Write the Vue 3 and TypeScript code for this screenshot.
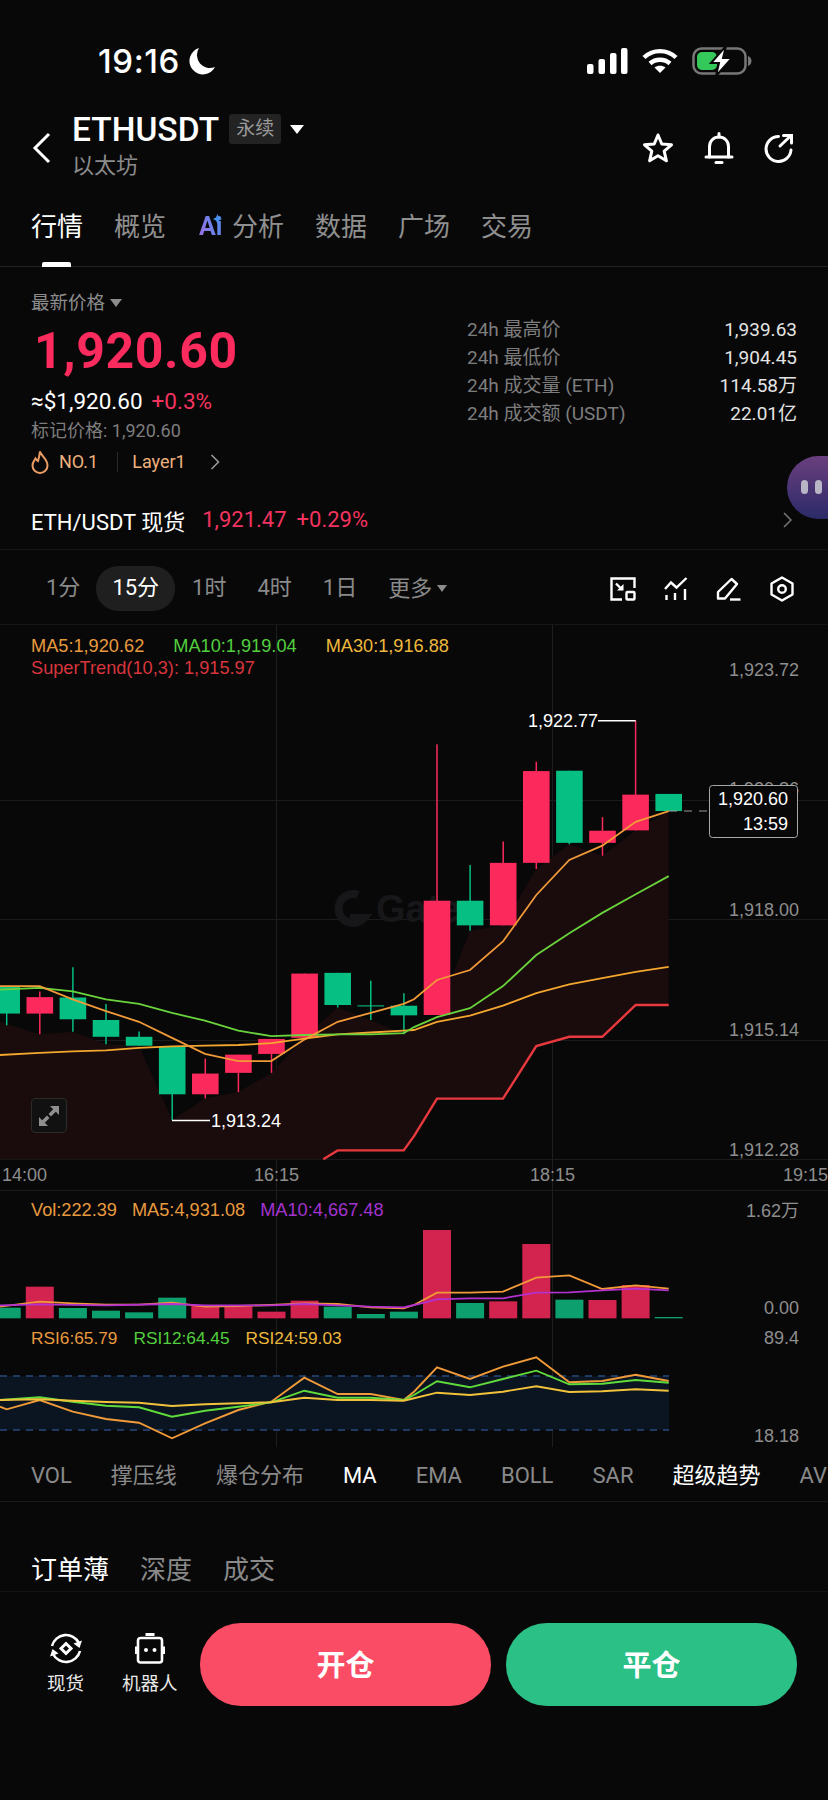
<script setup lang="ts">
// K线页面 — 坐标按截图裁剪取点，下面的 line()/yM() 负责换算成页面像素
type Pt = [number, number]

const yM = (z: number) => 620 + z / 2.8
const yL = (z: number) => 1180 + z / 3

// l: 左半裁剪的点, r: 右半裁剪的点
const toPts = (l: Pt[], r: Pt[], fy: (z: number) => number): [number, number][] => [
  ...l.map(([x, z]): [number, number] => [x / 3, fy(z)]),
  ...r.map(([x, z]): [number, number] => [414 + x / 3, fy(z)]),
]
const line = (l: Pt[], r: Pt[], fy: (z: number) => number) =>
  toPts(l, r, fy).map((p) => p.map((v) => v.toFixed(1)).join(',')).join(' ')

const barX = (i: number) => 6.7 + 33.1 * i

interface Candle { up: boolean; top: number; bot: number; hi: number; lo: number }
const candles: Candle[] = [
  { up: true, top: 1027, bot: 1102, hi: 1027, lo: 1135 },
  { up: false, top: 1056, bot: 1102, hi: 1040, lo: 1160 },
  { up: true, top: 1057, bot: 1118, hi: 972, lo: 1153 },
  { up: true, top: 1120, bot: 1167, hi: 1075, lo: 1188 },
  { up: true, top: 1167, bot: 1192, hi: 1152, lo: 1192 },
  { up: true, top: 1193, bot: 1328, hi: 1193, lo: 1400 },
  { up: false, top: 1270, bot: 1328, hi: 1228, lo: 1340 },
  { up: false, top: 1217, bot: 1268, hi: 1217, lo: 1322 },
  { up: false, top: 1173, bot: 1215, hi: 1173, lo: 1268 },
  { up: false, top: 990, bot: 1170, hi: 990, lo: 1170 },
  { up: true, top: 988, bot: 1078, hi: 988, lo: 1085 },
  { up: true, top: 1079, bot: 1082, hi: 1010, lo: 1120 },
  { up: true, top: 1080, bot: 1107, hi: 1045, lo: 1160 },
  { up: false, top: 786, bot: 1106, hi: 348, lo: 1106 },
  { up: true, top: 786, bot: 855, hi: 686, lo: 870 },
  { up: false, top: 680, bot: 855, hi: 620, lo: 855 },
  { up: false, top: 423, bot: 680, hi: 397, lo: 697 },
  { up: true, top: 422, bot: 624, hi: 422, lo: 628 },
  { up: false, top: 590, bot: 624, hi: 552, lo: 660 },
  { up: false, top: 489, bot: 589, hi: 282, lo: 589 },
  { up: true, top: 487, bot: 535, hi: 487, lo: 535 },
]

const ma5 = line(
  [[0, 1025], [119, 1025], [218, 1062], [318, 1095], [417, 1125], [516, 1170], [615, 1215], [680, 1228], [715, 1235], [814, 1235], [913, 1175], [1013, 1125], [1112, 1100], [1211, 1075]],
  [[0, 1062], [69, 1008], [168, 980], [267, 900], [367, 770], [466, 672], [565, 632], [665, 565], [764, 535]],
  yM,
)
const ma10 = line(
  [[0, 1035], [119, 1030], [218, 1040], [318, 1062], [417, 1075], [516, 1100], [615, 1122], [715, 1150], [814, 1165], [913, 1162], [1013, 1160], [1112, 1160], [1211, 1157]],
  [[0, 1140], [69, 1112], [168, 1087], [267, 1025], [367, 938], [466, 877], [565, 820], [665, 768], [764, 717]],
  yM,
)
const ma30 = line(
  [[0, 1218], [119, 1212], [218, 1208], [318, 1205], [417, 1198], [516, 1194], [615, 1192], [715, 1190], [814, 1185], [913, 1172], [1013, 1160], [1112, 1155], [1211, 1150]],
  [[0, 1148], [69, 1125], [168, 1108], [267, 1080], [367, 1045], [466, 1020], [565, 1003], [665, 985], [764, 971]],
  yM,
)
const superLeft: Pt[] = [[970, 1510], [1013, 1485], [1211, 1485]]
const superRight: Pt[] = [[0, 1445], [69, 1340], [267, 1340], [367, 1193], [466, 1167], [565, 1167], [665, 1078], [764, 1078]]
const superLine = line(superLeft, superRight, yM)

// 超级趋势下方的暗红填充
const trendFill = [
  line(
    [[0, 1125], [119, 1160], [218, 1153], [318, 1188], [417, 1192], [516, 1400], [615, 1340], [715, 1322], [814, 1268], [913, 1170], [1013, 1085], [1112, 1120], [1211, 1160]],
    [[69, 1106], [168, 870], [267, 855], [367, 697], [466, 628], [565, 660], [665, 589], [764, 535]],
    yM,
  ),
  line([], [...superRight].reverse(), yM),
  line([...superLeft].reverse(), [], yM),
  `0,${yM(1510).toFixed(1)}`,
].join(' ')

const grid = [800, 919, 1040, 1159]
const priceAxis = [
  { t: '1,923.72', y: 669 },
  { t: '1,918.00', y: 909 },
  { t: '1,915.14', y: 1029 },
  { t: '1,912.28', y: 1149 },
]
const timeAxis = [
  { t: '14:00', x: 2 },
  { t: '16:15', x: 254 },
  { t: '18:15', x: 530 },
  { t: '19:15', x: 783 },
]

const volBase = yL(415)
const vols: [number, boolean][] = [
  [383, true], [320, false], [384, true], [392, true], [397, true], [353, true], [378, false],
  [378, false], [395, false], [362, false], [380, true], [402, true], [395, true], [150, false],
  [369, true], [364, false], [192, false], [359, true], [360, false], [315, false], [411, true],
]
const volMa5 = line(
  [[0, 380], [119, 365], [218, 370], [318, 374], [417, 374], [516, 368], [615, 380], [715, 378], [814, 375], [913, 370], [1013, 372], [1112, 382], [1211, 385]],
  [[0, 375], [69, 338], [168, 338], [267, 335], [367, 293], [466, 286], [565, 327], [665, 316], [764, 326]],
  yL,
)
const volMa10 = line(
  [[0, 376], [119, 373], [318, 376], [516, 372], [615, 376], [814, 376], [913, 372], [1013, 376], [1112, 380], [1211, 382]],
  [[0, 375], [69, 358], [168, 355], [267, 355], [367, 338], [466, 337], [565, 331], [665, 326], [764, 331]],
  yL,
)
const rsi6 = line(
  [[0, 680], [20, 688], [119, 660], [218, 695], [318, 717], [417, 728], [516, 775], [615, 730], [715, 690], [814, 665], [913, 593], [1013, 642], [1112, 642], [1211, 660]],
  [[0, 635], [69, 562], [168, 597], [267, 560], [367, 532], [466, 607], [565, 603], [665, 584], [764, 603]],
  yL,
)
const rsi12 = line(
  [[0, 660], [119, 652], [218, 665], [318, 677], [417, 682], [516, 710], [615, 692], [715, 680], [814, 667], [913, 632], [1013, 653], [1112, 653], [1211, 660]],
  [[0, 645], [69, 604], [168, 622], [267, 597], [367, 572], [466, 613], [565, 611], [665, 600], [764, 608]],
  yL,
)
const rsi24 = line(
  [[0, 660], [119, 658], [218, 662], [318, 666], [417, 668], [516, 678], [615, 673], [715, 670], [814, 667], [913, 653], [1013, 660], [1112, 660], [1211, 662]],
  [[0, 655], [69, 638], [168, 645], [267, 635], [367, 619], [466, 636], [565, 634], [665, 628], [764, 632]],
  yL,
)

const stats = [
  { label: '24h 最高价', value: '1,939.63' },
  { label: '24h 最低价', value: '1,904.45' },
  { label: '24h 成交量 (ETH)', value: '114.58万' },
  { label: '24h 成交额 (USDT)', value: '22.01亿' },
]
const indicators = [
  { t: 'VOL' }, { t: '撑压线' }, { t: '爆仓分布' }, { t: 'MA', on: true }, { t: 'EMA' },
  { t: 'BOLL' }, { t: 'SAR' }, { t: '超级趋势', on: true }, { t: 'AVL' },
]
</script>

<template>
  <div class="page">
    <div class="status">
      <div class="status-left">
        <span class="clock">19:16</span>
        <svg width="27" height="28" viewBox="0 0 27 28"><path d="M10 1A13.5 13.5 0 1 0 26 20 A13 13 0 0 1 10 1Z" fill="#fff" /></svg>
      </div>
      <div class="status-right">
        <svg width="41" height="26" viewBox="0 0 41 26" fill="#fff">
          <rect x="0" y="16" width="6.5" height="10" rx="2" />
          <rect x="11.5" y="11" width="6.5" height="15" rx="2" />
          <rect x="23" y="5" width="6.5" height="21" rx="2" />
          <rect x="34" y="0" width="6.5" height="26" rx="2" />
        </svg>
        <svg width="36" height="26" viewBox="0 0 36 26" fill="none" stroke="#fff" stroke-width="4.4">
          <path d="M2 9.5C11 1 25 1 34 9.5" />
          <path d="M8 15.5C13.5 10.5 22.5 10.5 28 15.5" />
          <path d="M18 25L12.5 19.5C15.5 17 20.5 17 23.5 19.5Z" fill="#fff" stroke="none" />
        </svg>
        <svg width="60" height="30" viewBox="0 0 60 30" fill="none">
          <rect x="1.5" y="2.5" width="52" height="25" rx="8" stroke="#777" stroke-width="2.5" />
          <path d="M56 10c2 .5 3.5 2.5 3.5 5s-1.500 4.500-3.500 5Z" fill="#777" />
          <rect x="5" y="6" width="20" height="18" rx="5" fill="#34c759" />
          <path d="M34 0L19 17H27L24 30L40 12H31Z" fill="#fff" stroke="#080809" stroke-width="2" />
        </svg>
      </div>
    </div>

    <header class="head">
      <svg class="back" width="20" height="32" viewBox="0 0 20 32" fill="none" stroke="#fff" stroke-width="3"><path d="M17 2L3 16L17 30" /></svg>
      <div class="title">
        <div class="title-row">
          <span class="symbol">ETHUSDT</span>
          <span class="perp">永续</span>
          <span class="caret-w"></span>
        </div>
        <div class="cn-name">以太坊</div>
      </div>
      <div class="head-icons">
        <svg width="32" height="32" viewBox="0 0 32 32" fill="none" stroke="#fff" stroke-width="3" stroke-linejoin="round"><path d="M16 3L19.800 12L29.500 12.800L22.200 19.200L24.400 28.800L16 23.700L7.600 28.800L9.800 19.200L2.500 12.800L12.200 12Z" /></svg>
        <svg width="30" height="32" viewBox="0 0 30 32" fill="none" stroke="#fff" stroke-width="3" stroke-linecap="round"><path d="M5.500 25V14.500C5.500 9 9.500 5 15 5S24.500 9 24.500 14.500V25" /><path d="M2 25H28M15 1.500V5" /><path d="M12 30.500H18" /></svg>
        <svg width="30" height="30" viewBox="0 0 30 30" fill="none" stroke="#fff" stroke-width="3" stroke-linecap="round"><path d="M14.500 3.500A12.500 12.500 0 1 0 27 17" /><path d="M16 13L26.500 3M19.500 2.500H27.500V10" /></svg>
      </div>
    </header>

    <nav class="tabs">
      <span class="tab active">行情</span>
      <span class="tab">概览</span>
      <span class="tab ai-tab">
        <span class="ai">Ai<svg class="ai-star" width="9" height="10" viewBox="0 0 9 10"><path d="M4.500 0L6 3.500L9 5L6 6.500L4.500 10L3 6.500L0 5L3 3.500Z" fill="#4a90f0" /></svg></span>分析
      </span>
      <span class="tab">数据</span>
      <span class="tab">广场</span>
      <span class="tab">交易</span>
    </nav>

    <section class="info">
      <div class="info-left">
        <div class="latest">最新价格<span class="caret-g"></span></div>
        <div class="last-price">1,920.60</div>
        <div class="usd">≈$1,920.60<span class="up">+0.3%</span></div>
        <div class="mark">标记价格: 1,920.60</div>
        <div class="rank">
          <svg width="18" height="24" viewBox="0 0 18 24" fill="none" stroke="#eb9c62" stroke-width="2"><path d="M9 1.500C10 6 16.500 9 16.500 15.500A7.500 7.500 0 0 1 1.500 15.500C1.500 12 3.500 10.500 4.500 8.500C5.500 10 6 10.500 7 11C8 8 8.500 5 9 1.500Z" /></svg>
          <span class="no1">NO.1</span>
          <i class="rank-sep"></i>
          <span>Layer1</span>
          <svg class="rank-go" width="10" height="18" viewBox="0 0 10 18" fill="none" stroke="#999" stroke-width="1.600"><path d="M1.500 2L8.500 9L1.500 16" /></svg>
        </div>
      </div>
      <div class="info-right">
        <div v-for="s in stats" :key="s.label" class="stat">
          <span>{{ s.label }}</span><b>{{ s.value }}</b>
        </div>
      </div>
    </section>

    <div class="spot">
      <span class="spot-name">ETH/USDT 现货</span>
      <span class="up spot-price">1,921.47</span>
      <span class="up">+0.29%</span>
      <svg class="spot-go" width="9" height="18" viewBox="0 0 9 18" fill="none" stroke="#777" stroke-width="1.500"><path d="M1 2L8 9L1 16" /></svg>
    </div>

    <div class="periods">
      <div class="period-list">
        <span class="period">1分</span>
        <span class="period on">15分</span>
        <span class="period">1时</span>
        <span class="period">4时</span>
        <span class="period day">1日</span>
        <span class="period more">更多<i class="caret-g small"></i></span>
      </div>
      <div class="tools">
        <svg width="26" height="24" viewBox="0 0 26 24" fill="none" stroke="#fff" stroke-width="2.400"><path d="M12 22.500H1.500V1.500H24.500V11" /><rect x="16.500" y="15" width="8" height="7.500" rx="1" /><path d="M6 6.500L12 12.500" /><path d="M7 13.500H13.500V7Z" fill="#fff" stroke="none" /></svg>
        <svg width="24" height="24" viewBox="0 0 24 24" fill="none" stroke="#fff" stroke-width="2.400"><path d="M1 12L7 5.500L12.500 10.500L22.500 1" /><path d="M2.500 18V23M11 16V23M21 12V23" /></svg>
        <svg width="26" height="24" viewBox="0 0 26 24" fill="none" stroke="#fff" stroke-width="2.400" stroke-linejoin="round"><path d="M15.500 2L21 7L9 21.500H2V15Z" /><path d="M14 22.500H24.500" /></svg>
        <svg width="24" height="26" viewBox="0 0 24 26" fill="none" stroke="#fff" stroke-width="2.400" stroke-linejoin="round"><path d="M12 1.500L22.500 7.500V18.500L12 24.500L1.500 18.500V7.500Z" /><circle cx="12" cy="13" r="3.800" /></svg>
      </div>
    </div>

    <section class="chart">
      <div class="legend l-ma"><span class="c-o">MA5:1,920.62</span><span class="c-g">MA10:1,919.04</span><span class="c-y">MA30:1,916.88</span></div>
      <div class="legend l-st"><span class="c-r">SuperTrend(10,3): 1,915.97</span></div>
      <div class="legend l-vol"><span class="c-o">Vol:222.39</span><span class="c-o">MA5:4,931.08</span><span class="c-p">MA10:4,667.48</span></div>
      <div class="legend l-rsi"><span class="c-o">RSI6:65.79</span><span class="c-g">RSI12:64.45</span><span class="c-y">RSI24:59.03</span></div>

      <svg class="plot" width="828" height="825" viewBox="0 625 828 825">
        <line v-for="g in grid" :key="g" x1="0" x2="828" :y1="g + 0.5" :y2="g + 0.5" stroke="#1b1b1c" />
        <line x1="0" x2="828" y1="1190.500" y2="1190.500" stroke="#1b1b1c" />
        <line x1="276.500" x2="276.500" y1="625" y2="1447" stroke="#1d1d1e" />
        <line x1="552.500" x2="552.500" y1="625" y2="1447" stroke="#1d1d1e" />

        <text x="376" y="922" class="mark-text">Gate</text>
        <path d="M358 895A14.500 14.500 0 1 0 364 918H350" fill="none" stroke="#17171a" stroke-width="8" />

        <polygon :points="trendFill" fill="#1a0b0c" />

        <g v-for="(c, i) in candles" :key="i" :fill="c.up ? '#06bf82' : '#fc2a5c'" :stroke="c.up ? '#06bf82' : '#fc2a5c'">
          <line :x1="barX(i)" :x2="barX(i)" :y1="yM(c.hi)" :y2="yM(c.lo)" stroke-width="1.500" />
          <rect :x="barX(i) - 13.300" :y="yM(c.top)" width="26.600" :height="yM(c.bot) - yM(c.top)" stroke="none" />
        </g>

        <g fill="none">
          <polyline :points="ma30" stroke="#f4a72e" stroke-width="1.800" />
          <polyline :points="ma10" stroke="#69d33c" stroke-width="1.800" />
          <polyline :points="ma5" stroke="#f19a38" stroke-width="1.800" />
          <polyline :points="superLine" stroke="#e8393f" stroke-width="2.400" />
        </g>

        <path d="M598 720.800H635.700M172 1120.500H210" stroke="#fff" stroke-width="1.400" fill="none" />
        <text x="598" y="727" class="label" text-anchor="end" fill="#fff">1,922.77</text>
        <text x="211" y="1127" class="label" fill="#fff">1,913.24</text>

        <text v-for="p in priceAxis" :key="p.t" x="799" :y="p.y + 6.500" class="label" text-anchor="end" fill="#8e8e8e">{{ p.t }}</text>
        <text x="799" y="794.500" class="label" text-anchor="end" fill="#8e8e8e">1,920.86</text>
        <text v-for="a in timeAxis" :key="a.t" :x="a.x" y="1181" class="label" fill="#8e8e8e">{{ a.t }}</text>

        <path d="M669 811H709" stroke="#9a9a9a" stroke-dasharray="8 7" />
        <rect x="709.500" y="785.500" width="88" height="52" rx="3" fill="#080809" stroke="#a8a8a8" />
        <text x="788" y="805" class="label" text-anchor="end" fill="#fff">1,920.60</text>
        <text x="788" y="830" class="label" text-anchor="end" fill="#fff">13:59</text>

        <g v-for="(v, i) in vols" :key="'v' + i">
          <rect :x="barX(i) - 14" :y="yL(v[0])" width="28" :height="volBase - yL(v[0])" :fill="v[1] ? '#0d9f6e' : '#d3234f'" />
        </g>
        <polyline :points="volMa5" fill="none" stroke="#f19a38" stroke-width="1.800" />
        <polyline :points="volMa10" fill="none" stroke="#b331cf" stroke-width="1.800" />
        <text x="799" y="1217" class="label" text-anchor="end" fill="#8e8e8e">1.62<tspan class="cjk">万</tspan></text>
        <text x="799" y="1314" class="label" text-anchor="end" fill="#8e8e8e">0.00</text>
        <text x="799" y="1344" class="label" text-anchor="end" fill="#8e8e8e">89.4</text>
        <text x="799" y="1442" class="label" text-anchor="end" fill="#8e8e8e">18.18</text>

        <rect x="0" y="1376" width="669" height="54" fill="#0a1521" />
        <path d="M0 1376H669M0 1430H669" stroke="#28497d" stroke-width="1.400" stroke-dasharray="7 6" />
        <g fill="none" stroke-width="1.900">
          <polyline :points="rsi6" stroke="#f19a38" />
          <polyline :points="rsi12" stroke="#5fdc3c" />
          <polyline :points="rsi24" stroke="#f2c23a" />
        </g>
      </svg>

      <button class="expand" type="button">
        <svg width="20" height="20" viewBox="0 0 20 20" fill="#8f8f8f"><path d="M20 0V9L16.800 5.800L12 10.500L9.500 8L14.200 3.200L11 0Z" /><path d="M0 20V11L3.200 14.200L8 9.500L10.500 12L5.800 16.800L9 20Z" /></svg>
      </button>
    </section>

    <div class="indicators">
      <span v-for="ind in indicators" :key="ind.t" :class="{ on: ind.on }">{{ ind.t }}</span>
    </div>

    <div class="book-tabs">
      <span class="on">订单薄</span><span>深度</span><span>成交</span>
    </div>

    <footer class="actions">
      <div class="shortcut spot-link">
        <svg width="32" height="31" viewBox="0 0 32 31" fill="none" stroke="#fff" stroke-width="2.600">
          <path d="M2 13A14.500 14.500 0 0 1 29 10" />
          <path d="M30 18A14.500 14.500 0 0 1 3 21" />
          <path d="M32 7.500L29.500 15L23.500 10.500Z" fill="#fff" stroke="none" />
          <path d="M0 23.500L2.500 16L8.500 20.500Z" fill="#fff" stroke="none" />
          <path d="M16 10.500L21 15.500L16 20.500L11 15.500Z" stroke-width="3" />
        </svg>
        <span>现货</span>
      </div>
      <div class="shortcut bot-link">
        <svg width="30" height="31" viewBox="0 0 30 31" fill="none" stroke="#fff" stroke-width="2.600">
          <rect x="3" y="5" width="24" height="24.500" rx="2.500" />
          <path d="M10.500 1.500H19.500" stroke-width="3" />
          <path d="M1 13.500V21M29 13.500V21" stroke-width="2" />
          <circle cx="11" cy="17" r="2" fill="#fff" stroke="none" />
          <circle cx="19.500" cy="17" r="2" fill="#fff" stroke="none" />
        </svg>
        <span>机器人</span>
      </div>
      <button class="trade open" type="button">开仓</button>
      <button class="trade close" type="button">平仓</button>
    </footer>

    <div class="bubble"><i></i><i></i></div>
  </div>
</template>

<style scoped>
.page {
  position: relative;
  width: 828px;
  height: 1800px;
  overflow: hidden;
  background: #080809;
  color: #fff;
  font-family: Roboto, "Noto Sans CJK SC", sans-serif;
}

.status {
  height: 100px;
  box-sizing: border-box;
  padding: 47px 76px 0 98px;
  display: flex;
  justify-content: space-between;
}
.status-left {
  display: flex;
  align-items: center;
  gap: 9px;
  height: 28px;
}
.clock {
  font-family: Inter, sans-serif;
  font-size: 33px;
  font-weight: 500;
  letter-spacing: 0.600px;
}
.status-right {
  display: flex;
  gap: 14px;
  align-items: center;
  height: 28px;
}

.head {
  height: 90px;
  display: flex;
  align-items: flex-start;
}
.back {
  margin: 32px 0 0 32px;
}
.title {
  margin-left: 20px;
}
.title-row {
  display: flex;
  align-items: center;
  height: 46px;
  margin-top: 6px;
}
.symbol {
  font-size: 33.500px;
  font-weight: 500;
}
.perp {
  margin-left: 10px;
  width: 52px;
  height: 30px;
  line-height: 30px;
  text-align: center;
  background: #232324;
  color: #999;
  font-size: 19px;
  border-radius: 3px;
}
.caret-w {
  margin-left: 9px;
  border-left: 7px solid transparent;
  border-right: 7px solid transparent;
  border-top: 9px solid #fff;
}
.cn-name {
  color: #8c8c8c;
  font-size: 22px;
  line-height: 30px;
  margin-top: -1px;
}
.head-icons {
  margin-left: auto;
  margin-right: 34px;
  margin-top: 32px;
  display: flex;
  gap: 30px;
  align-items: center;
}

.tabs {
  position: relative;
  height: 77px;
  box-sizing: border-box;
  border-bottom: 1px solid #232324;
  padding-left: 31px;
  display: flex;
  gap: 31px;
  font-size: 26px;
  line-height: 74px;
  color: #8f8f8f;
}
.tab {
  position: relative;
  white-space: nowrap;
}
.tab.active {
  color: #fff;
}
.tab.active::after {
  content: "";
  position: absolute;
  left: 11px;
  bottom: -1px;
  width: 29px;
  height: 5px;
  background: #fff;
  border-radius: 2px 2px 0 0;
}
.ai-tab {
  display: flex;
}
.ai {
  position: relative;
  width: 35px;
  padding-left: 2px;
  box-sizing: border-box;
  font-weight: 700;
  font-size: 25px;
  background: linear-gradient(70deg, #a868e0 10%, #4e90f0 70%);
  -webkit-background-clip: text;
  background-clip: text;
  color: transparent;
}
.ai-star {
  position: absolute;
  left: 16px;
  top: 24px;
}

.info {
  height: 197px;
  box-sizing: border-box;
  display: flex;
  justify-content: space-between;
  padding: 24px 31px 0;
}
.latest {
  color: #8c8c8c;
  font-size: 18.500px;
  line-height: 24px;
  display: flex;
  align-items: center;
}
.caret-g {
  display: inline-block;
  margin-left: 5px;
  border-left: 6px solid transparent;
  border-right: 6px solid transparent;
  border-top: 8px solid #8c8c8c;
}
.caret-g.small {
  border-left-width: 5px;
  border-right-width: 5px;
  border-top-width: 7px;
}
.last-price {
  color: #fb2b5e;
  font-size: 50px;
  font-weight: 700;
  line-height: 56px;
  letter-spacing: 0.600px;
  margin: 8px 0 0 3px;
}
.usd {
  font-size: 22.500px;
  line-height: 30px;
  margin-top: 7px;
}
.up {
  color: #f3335f;
}
.usd .up {
  margin-left: 9px;
}
.mark {
  color: #7d7d7d;
  font-size: 18px;
  line-height: 30px;
}
.rank {
  display: flex;
  align-items: center;
  color: #eeb07c;
  font-size: 18px;
  line-height: 30px;
  margin-top: 1px;
}
.no1 {
  margin-left: 10px;
}
.rank-sep {
  width: 1px;
  height: 20px;
  margin: 0 14px 0 19px;
  background: #2a2a2a;
}
.rank-go {
  margin-left: 24px;
}
.info-right {
  width: 330px;
  padding-top: 25px;
}
.stat {
  display: flex;
  justify-content: space-between;
  height: 28px;
  line-height: 28px;
  font-size: 19px;
  color: #7d7d7d;
}
.stat b {
  color: #e4e4e4;
  font-weight: 400;
}

.spot {
  height: 86px;
  box-sizing: border-box;
  border-bottom: 1px solid #161617;
  padding: 26px 36px 0 31px;
  display: flex;
  align-items: center;
  font-size: 22px;
}
.spot-name {
  margin-right: 17px;
}
.spot-price {
  margin-right: 10px;
}
.spot-go {
  margin-left: auto;
}

.periods {
  height: 75px;
  box-sizing: border-box;
  border-bottom: 1px solid #161617;
  padding: 16px 34px 0 0;
  display: flex;
  justify-content: space-between;
}
.period-list {
  display: flex;
  align-items: center;
  height: 45px;
  padding-left: 29px;
  font-size: 22px;
  color: #8a8a8a;
}
.period {
  padding: 0 17px;
  margin-right: -1px;
  height: 45px;
  line-height: 44px;
  border-radius: 22px;
  white-space: nowrap;
}
.period.on {
  color: #fff;
  background: #1f1f20;
  padding: 0 16px;
  margin: 0 2px 0 0;
}
.period + .period:not(.on) {
  margin-left: -2px;
  padding: 0 17px;
}
.period.day {
  margin-left: -1px;
}
.more {
  display: flex;
  align-items: center;
}
.tools {
  display: flex;
  align-items: center;
  height: 45px;
  gap: 28px;
}

.chart {
  position: relative;
  height: 825px;
}
.plot {
  display: block;
}
.legend {
  position: absolute;
  left: 31px;
  z-index: 1;
  display: flex;
  font-family: "Liberation Sans", sans-serif;
  font-size: 18.200px;
  line-height: 22px;
  white-space: nowrap;
}
.l-ma {
  top: 10px;
  gap: 29px;
}
.l-st {
  top: 32px;
}
.l-vol {
  top: 574px;
  gap: 15px;
}
.l-rsi {
  top: 702px;
  gap: 16px;
  font-size: 17.300px;
}
.c-o { color: #e89a3e; }
.c-g { color: #52cf3e; }
.c-y { color: #eeb83c; }
.c-r { color: #d8353c; }
.c-p { color: #a333d0; }
.label {
  font-family: "Liberation Sans", sans-serif;
  font-size: 18px;
}
.cjk {
  font-family: "Noto Sans CJK SC", sans-serif;
}
.mark-text {
  font-family: "Liberation Sans", sans-serif;
  font-weight: 700;
  font-size: 38px;
  fill: #17171a;
}
.expand {
  position: absolute;
  left: 31px;
  top: 473px;
  width: 36px;
  height: 35px;
  padding: 0;
  display: flex;
  align-items: center;
  justify-content: center;
  background: #111112;
  border: 1px solid #2b2b2c;
  border-radius: 4px;
}

.indicators {
  height: 52px;
  box-sizing: border-box;
  border-bottom: 1px solid #1a1a1b;
  padding: 8px 0 0 31px;
  display: flex;
  gap: 39px;
  font-size: 22px;
  line-height: 36px;
  color: #8a8a8a;
  white-space: nowrap;
}
.indicators .on {
  color: #fff;
}

.book-tabs {
  height: 90px;
  box-sizing: border-box;
  border-bottom: 1px solid #141415;
  padding: 46px 0 0 31px;
  display: flex;
  gap: 31px;
  font-size: 26px;
  line-height: 44px;
  color: #8a8a8a;
}
.book-tabs .on {
  color: #fff;
}

.actions {
  position: relative;
  padding: 31px 31px 0 200px;
  display: flex;
  gap: 15px;
}
.shortcut {
  position: absolute;
  top: 41px;
  display: flex;
  flex-direction: column;
  align-items: center;
  gap: 7px;
  font-size: 18.500px;
  line-height: 26px;
  color: #e8e8e8;
}
.spot-link {
  left: 47px;
}
.bot-link {
  left: 122px;
}
.trade {
  flex: 1;
  height: 83px;
  border: 0;
  border-radius: 41px;
  padding: 0 0 3px;
  color: #fff;
  font-family: "Noto Sans CJK SC", sans-serif;
  font-size: 29px;
  font-weight: 700;
}
.open {
  background: #fa4d65;
}
.close {
  background: #2bc086;
}

.bubble {
  position: absolute;
  left: 787px;
  top: 456px;
  width: 82px;
  height: 63px;
  border-radius: 32px;
  background: linear-gradient(#6a3f7e, #2b2a68);
  display: flex;
  gap: 7px;
  padding: 24px 0 0 14px;
  box-sizing: border-box;
}
.bubble i {
  width: 7px;
  height: 14px;
  border-radius: 4px;
  background: #b9b6c6;
}
</style>
